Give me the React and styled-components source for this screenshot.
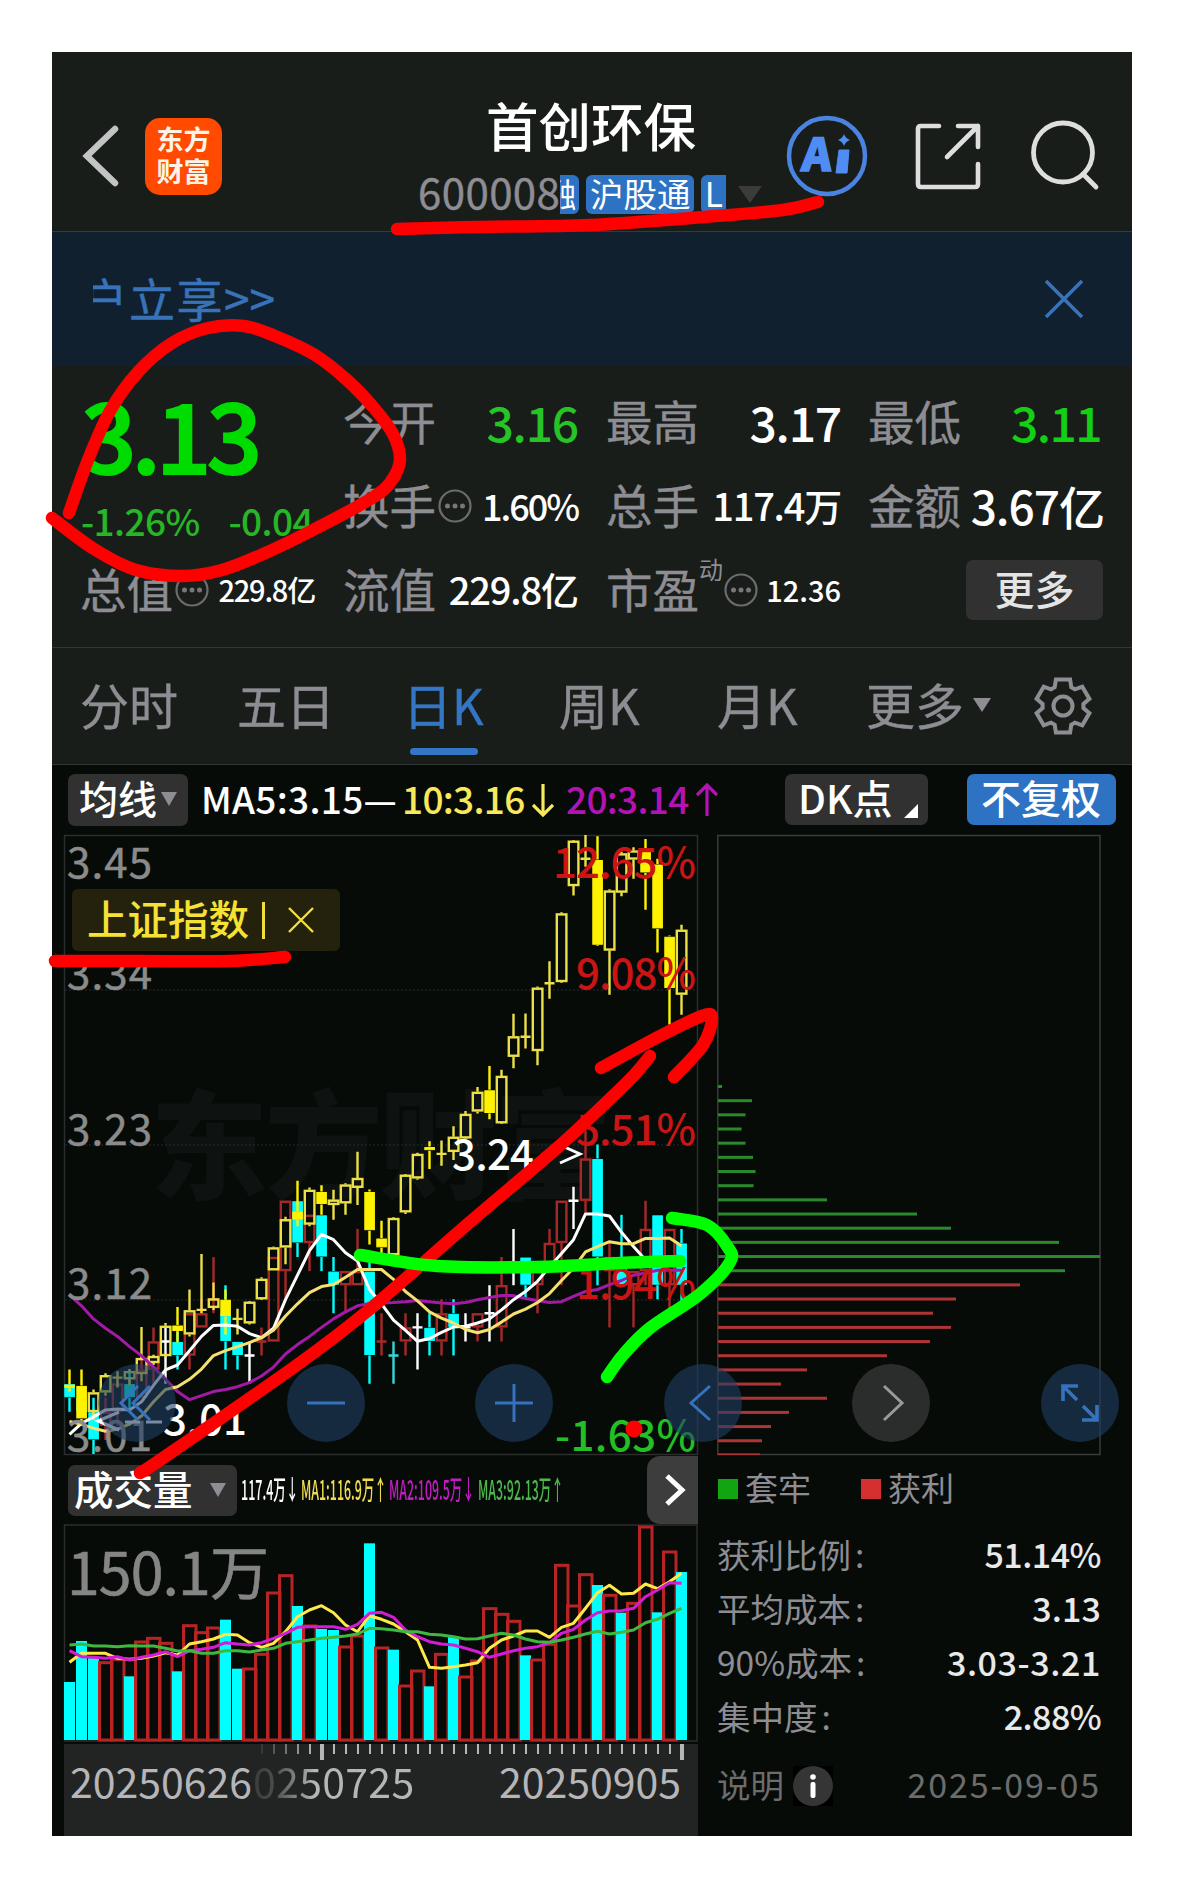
import styled, { createGlobalStyle, css } from "styled-components";

const GlobalStyle = createGlobalStyle`
  body{
    margin: 0;
    background-color: #fff;
    font-family: "Noto Sans CJK SC", "Noto Sans", sans-serif;
  }
  *{
    box-sizing: border-box;
  }
`

const Page = styled.div`
  position: relative;
  width: 1184px;
  height: 1888px;
  padding: 52px;
  overflow: hidden;
`

const Phone = styled.main`
  display: flex;
  flex-direction: column;
  width: 1080px;
  height: 1784px;
  background-color: #060b08;
  line-height: 1;
  white-space: nowrap;
  overflow: hidden;
`

/* ---------- header ---------- */

const Header = styled.header`
  display: grid;
  grid-template-columns: 93px 77px 196px 315px 1fr;
  height: 180px;
  background-color: #191d1a;
  border-bottom: 1px solid #343b38;
  align-items: start;

  .back{
    margin: 70px 0 0 27px;
  }
`

const Logo = styled.div`
  display: flex;
  flex-direction: column;
  justify-content: center;
  align-items: center;
  width: 77px;
  height: 77px;
  margin-top: 66px;
  padding-bottom: 4px;
  border-radius: 15px;
  background-color: #ff4a00;
  color: #fff3e6;
  font-size: 27px;
  font-weight: 700;
  line-height: 32px;
`

const TitleBox = styled.div`
  grid-column: 4;
  padding-top: 46px;

  h1{
    margin: 0 0 0 68px;
    color: #fff;
    font-size: 52.5px;
    font-weight: 500;
    line-height: 52px;
  }
`

const CodeRow = styled.div`
  display: flex;
  align-items: center;
  height: 39px;
  margin-top: 25px;

  .code{
    width: 144px;
    padding-bottom: 7px;
    color: #8e8d93;
    font-size: 42px;
    letter-spacing: .4px;
    -webkit-text-stroke: .4px #8e8d93;
  }
`

const Badge = styled.span`
  display: flex;
  justify-content: ${p => p.$end ? "flex-end" : "center"};
  align-items: center;
  width: ${p => p.$w}px;
  height: 39px;
  margin-right: 7px;
  padding: 0 ${p => p.$end ? 3 : 0}px 4px 0;
  border-radius: ${p => p.$radius || "6px"};
  background-color: #2e72c4;
  color: #fff;
  font-size: 33.5px;
  overflow: hidden;
  flex-shrink: 0;
`

const Triangle = styled.span`
  flex-shrink: 0;
  width: 0;
  height: 0;
  margin: ${p => p.$m || 0};
  border-left: ${p => p.$w / 2}px solid transparent;
  border-right: ${p => p.$w / 2}px solid transparent;
  border-top: ${p => p.$h}px solid ${p => p.$color};
`

const HeaderIcons = styled.div`
  display: flex;
  align-items: flex-start;
  padding-top: 60px;
  padding-left: 50px;

  svg{
    flex-shrink: 0;
  }
`

const Banner = styled.section`
  display: flex;
  justify-content: space-between;
  align-items: center;
  height: 134px;
  padding: 0 47px 0 41px;
  background-color: #11202f;
  color: #3873b9;

  .clip{
    display: flex;
    justify-content: flex-end;
    width: 182px;
    padding-bottom: 4px;
    overflow: hidden;
    font-size: 46px;
    -webkit-text-stroke: .5px #3873b9;
  }
  .text{
    letter-spacing: 1.5px;
  }
`

/* ---------- quote ---------- */

const Quote = styled.section`
  display: grid;
  grid-template-columns: 232px 232px 231px 233px;
  grid-template-rows: 84px 84px 84px;
  column-gap: 31px;
  height: 282px;
  padding: 14px 0 0 29px;
  background-color: #191d1a;
  border-bottom: 1px solid #333633;
`

const Price = styled.div`
  grid-row: span 2;

  .now{
    padding-top: 12px;
    color: #00dc00;
    font-size: 97px;
    font-weight: 500;
    line-height: 80px;
    letter-spacing: -4.6px;
    -webkit-text-stroke: 2.2px #00dc00;
  }
  .change{
    display: flex;
    justify-content: space-between;
    margin-top: 30px;
    color: #26b626;
    font-size: 37px;
    font-weight: 500;
    letter-spacing: -.6px;
  }
`

const Cell = styled.div`
  display: flex;
  align-items: center;
  height: 84px;
  width: ${p => p.$w || 234}px;
`

const Label = styled.span`
  padding-bottom: 4px;
  margin-left: -1px;
  color: #8e8d93;
  font-size: 46.5px;
  -webkit-text-stroke: .4px #8e8d93;
`

const Sup = styled.sup`
  align-self: flex-start;
  margin-top: 9px;
  margin-right: -1px;
  color: #8e8d93;
  font-size: 24px;
  line-height: 1;
`

const Value = styled.span`
  margin-left: auto;
  padding-bottom: 2px;
  color: ${p => p.$color || "#fff"};
  font-size: ${p => p.$size}px;
  font-weight: 500;
  letter-spacing: ${p => p.$ls || 0}px;
`

const MoreButton = styled.button`
  width: 138px;
  height: 60px;
  margin-left: 97px;
  padding: 0 0 5px;
  border: 0 none;
  border-radius: 7px;
  background-color: #303130;
  color: #e4e4e4;
  font: 500 40px/1 "Noto Sans CJK SC", sans-serif;
`

/* ---------- tabs ---------- */

const Tabs = styled.nav`
  display: grid;
  grid-template-columns: 157px 171px 151px 158px 149px 166px 1fr;
  height: 117px;
  padding: 0 0 0 28px;
  background-color: #191d1a;
  border-bottom: 1px solid #333633;
`

const Tab = styled.div`
  display: flex;
  align-items: flex-start;
  padding-top: ${p => p.$icon ? 28 : 31}px;
  padding-left: ${p => p.$icon ? 1 : 0}px;
  color: ${p => p.$active ? "#3476c4" : "#8e8d93"};
  font-size: 49px;
  line-height: 50px;
  -webkit-text-stroke: .4px currentColor;

  ${p => p.$active && css`
    flex-direction: column;
    text-indent: -5px;
    &::after{
      content: "";
      width: 68px;
      height: 7px;
      margin: 19px 0 0 2px;
      border-radius: 4px;
      background-color: #3476c4;
    }
  `}
`

/* ---------- chart area ---------- */

const Toolbar = styled.div`
  display: flex;
  align-items: center;
  height: 67px;
  padding: 2px 16px 0;
`

const ChipButton = styled.button`
  display: flex;
  align-items: center;
  flex-shrink: 0;
  width: ${p => p.$w}px;
  height: ${p => p.$h || 51}px;
  padding: 0 0 5px ${p => p.$pl}px;
  border: 0 none;
  border-radius: 7px;
  background-color: ${p => p.$blue ? "#2e72c4" : "#303130"};
  color: #fff;
  font: 500 ${p => p.$size || 40}px/1 "Noto Sans CJK SC", sans-serif;
  white-space: nowrap;
`

const Corner = styled.i`
  align-self: flex-end;
  width: 0;
  height: 0;
  margin: 0 0 2px 11px;
  border-left: 14px solid transparent;
  border-bottom: 14px solid #fff;
`

const MaText = styled.span`
  flex-shrink: 0;
  display: flex;
  align-items: center;
  width: ${p => p.$w}px;
  color: ${p => p.$color};
  font-size: 37px;
  font-weight: 500;
  letter-spacing: ${p => p.$ls ?? -.7}px;
  padding-bottom: 3px;

  svg{
    margin: 4px 0 0 7px;
  }
`

const Body = styled.div`
  display: grid;
  grid-template-columns: 634px 384px;
  column-gap: 19px;
  padding-left: 12px;
  height: 1004px;
`

const Column = styled.div`
  display: flex;
  flex-direction: column;
`

const ChartBox = styled.div`
  position: relative;
  height: ${p => p.$h}px;
  flex-shrink: 0;

  >svg{
    display: block;
    overflow: visible;
  }
`

const IndexTag = styled.div`
  position: absolute;
  left: 8px;
  top: 57px;
  display: flex;
  align-items: center;
  width: 268px;
  height: 62px;
  padding: 0 0 4px 15px;
  border-radius: 6px;
  background-color: #24220d;
  color: #f5e234;
  font-size: 40.5px;
  font-weight: 500;

  i{
    width: 3px;
    height: 37px;
    margin: 4px 22px 0 13px;
    background-color: #f0de3c;
  }
  svg{
    margin-top: 4px;
  }
`

const RoundButton = styled.button`
  position: absolute;
  left: ${p => p.$left}px;
  top: 532px;
  z-index: 2;
  display: flex;
  justify-content: center;
  align-items: center;
  width: 78px;
  height: 78px;
  padding: 0;
  border: 0 none;
  border-radius: 50%;
  background-color: ${p => p.$gray ? "rgba(50,51,50,.85)" : "rgba(32,62,100,.6)"};
`

const VolumeBar = styled.div`
  display: flex;
  align-items: center;
  height: 68px;
  padding-left: 4px;
`

const Squeezed = styled.span`
  width: ${p => p.$w}px;
  height: 30px;
  flex-shrink: 0;

  span{
    display: inline-block;
    color: ${p => p.$color};
    font-size: 27px;
    font-weight: 500;
    transform: scaleX(${p => p.$k});
    transform-origin: left center;
  }
`

const NextButton = styled.button`
  width: 51px;
  height: 68px;
  margin-left: auto;
  padding: 2px 0 0 5px;
  border: 0 none;
  border-radius: 13px 0 0 13px;
  background-color: #3c3d3c;
`

const Axis = styled.div`
  height: 92px;
  background-color: #222423;
`

const Dates = styled.div`
  display: flex;
  align-items: center;
  height: 40px;
  margin-top: -18px;
  padding: 0 17px 0 6px;
  color: #b6b5b8;
  font-size: 41px;

  span:last-child{
    margin-left: auto;
  }
  .mid{
    margin-left: 1px;
    letter-spacing: .3px;
    color: transparent;
    background: linear-gradient(90deg, #3a3b3b 0, #4c4c4c 22px, #b6b5b8 62px);
    background-clip: text;
    -webkit-background-clip: text;
  }
`

const Legend = styled.div`
  display: flex;
  align-items: center;
  height: 62px;

  span{
    display: flex;
    align-items: center;
    width: 143px;
    color: #8e8d93;
    font-size: 33px;
  }
  i{
    width: 20px;
    height: 20px;
    margin: 4px 7px 0 1px;
  }
`

const Stat = styled.div`
  display: flex;
  justify-content: space-between;
  align-items: center;
  height: 54px;
  padding-bottom: 4px;
  color: ${p => p.$dim ? "#6c6c6d" : "#8e8d93"};
  font-size: 33.5px;

  .colon{
    padding-left: 4px;
  }
  b{
    margin-left: auto;
    color: ${p => p.$dim ? "#6c6c6d" : "#e9e9e9"};
    font-weight: ${p => p.$dim ? 400 : 500};
    font-size: 34px;
    letter-spacing: ${p => p.$dim ? 1.9 : p.$ls}px;
  }
`

const Info = styled.span`
  display: flex;
  width: 40px;
  height: 40px;
  margin: 4px 0 0 9px;
  background-color: #000;
`

const Marks = styled.svg`
  position: absolute;
  left: 0;
  top: 0;
  z-index: 5;
  pointer-events: none;
`

/* ---------- data ---------- */

const X0 = 69.5
const STEP = 12
const barX = i => X0 + i * STEP
const priceY = p => 835 + (3.45 - p) * 1406.8
const levelY = v => 835 + (v - 37) / 2.449

// open, close, low, high
const STOCK = [
  [3.06,3.05,3.04,3.06],[3.05,3.04,3.04,3.05],[3.04,3.02,3.01,3.05],[3.03,3.04,3.02,3.05],[3.04,3.06,3.03,3.06],[3.06,3.05,3.04,3.07],
  [3.05,3.07,3.05,3.08],[3.07,3.09,3.06,3.10],[3.09,3.09,3.06,3.10],[3.09,3.08,3.07,3.10],[3.08,3.11,3.07,3.11],[3.10,3.11,3.10,3.12],
  [3.12,3.12,3.11,3.15],[3.11,3.09,3.07,3.13],[3.09,3.08,3.07,3.09],[3.08,3.08,3.06,3.09],[3.09,3.09,3.08,3.10],[3.09,3.15,3.09,3.15],
  [3.14,3.19,3.12,3.19],[3.19,3.16,3.15,3.19],[3.16,3.18,3.14,3.18],[3.18,3.15,3.14,3.18],[3.14,3.13,3.11,3.15],[3.13,3.14,3.11,3.14],
  [3.13,3.14,3.13,3.17],[3.14,3.08,3.06,3.15],[3.09,3.09,3.08,3.11],[3.08,3.08,3.06,3.09],[3.09,3.10,3.08,3.11],[3.10,3.10,3.07,3.11],
  [3.10,3.09,3.08,3.11],[3.09,3.11,3.08,3.12],[3.11,3.10,3.08,3.12],[3.10,3.10,3.09,3.11],[3.10,3.11,3.09,3.11],[3.11,3.11,3.09,3.13],
  [3.10,3.13,3.09,3.15],[3.14,3.14,3.13,3.17],[3.15,3.13,3.12,3.15],[3.13,3.14,3.11,3.14],[3.14,3.16,3.14,3.17],[3.16,3.19,3.13,3.19],
  [3.19,3.19,3.17,3.20],[3.19,3.22,3.18,3.24],[3.22,3.15,3.13,3.23],[3.14,3.15,3.10,3.16],[3.15,3.13,3.13,3.18],[3.13,3.14,3.10,3.14],
  [3.14,3.17,3.13,3.19],[3.18,3.13,3.12,3.18],[3.13,3.17,3.11,3.17],[3.16,3.13,3.11,3.17],
]
const WHITE_BARS = [8, 15, 29, 33, 35, 37, 42]
const CYAN_CROSS = [27]

// body top, body bottom, high, low, filled
const INDEX = [
  [1382,1392,1346,1400,1],[1385,1467,1346,1480,1],[1402,1450,1395,1470],[1360,1402,1355,1410],[1366,1366,1350,1390],[1350,1370,1345,1385],
  [1318,1357,1242,1375],[1313,1330,1310,1335],[1239,1313,1232,1316],[1237,1253,1193,1280,1],[1201,1260,1150,1265],[1200,1200,1063,1208],
  [1172,1195,1133,1200],[1174,1216,1150,1260,1],[1222,1222,1197,1260],[1180,1233,1178,1236],[1124,1174,1120,1176],[1047,1103,1045,1103],
  [978,1047,972,1088],[958,980,884,995,1],[906,991,900,995],[910,942,895,967,1],[930,943,906,979],[893,939,890,967],
  [877,901,813,943],[910,1006,905,1040,1],[1024,1048,982,1062,1],[975,1066,973,1068],[869,961,867,965],[818,878,815,881],
  [800,810,787,855,1],[818,818,785,847],[776,813,750,833],[720,780,713,782],[666,714,654,719],[661,719,603,733,1],
  [627,743,612,745],[530,580,475,608],[531,531,474,560],[411,566,408,601],[400,400,346,438],[229,397,226,399],
  [51,162,49,185],[95,95,37,115],[97,307,40,309,1],[173,320,170,428],[82,178,78,187],[75,97,67,144],
  [70,130,47,220,1],[108,267,95,325,1],[285,413,283,502,1],[269,428,257,477],
]

const MA5 = [1505,1478,1462,1445,1443,1445,1425,1385,1347,1335,1300,1265,1238,1237,1240,1258,1268,1245,1175,1115,1055,1015,1028,1060,1080,1150,1185,1225,1250,1277,1270,1255,1242,1240,1232,1222,1200,1175,1155,1130,1095,1062,1028,965,965,970,1010,1045,1078,1075,1075,1075]
const MA10 = [1473,1480,1490,1497,1492,1480,1460,1425,1395,1388,1370,1345,1312,1300,1290,1280,1268,1250,1215,1185,1158,1143,1138,1120,1101,1101,1101,1125,1155,1178,1205,1220,1232,1248,1256,1248,1230,1210,1198,1182,1160,1128,1098,1058,1045,1033,1038,1038,1025,1025,1024,1043]
const MA20 = [1163,1190,1222,1245,1265,1290,1312,1340,1370,1400,1420,1410,1400,1395,1388,1378,1362,1340,1308,1285,1265,1243,1222,1205,1190,1184,1183,1182,1180,1177,1180,1183,1185,1182,1175,1170,1165,1165,1172,1177,1182,1180,1167,1155,1150,1138,1128,1115,1110,1103,1103,1103]

// distance of every bar's top below the volume header
const VOL = [726,603,650,665,655,709,603,592,607,694,554,575,561,539,686,684,640,456,404,498,555,567,570,618,585,310,621,629,735,690,739,640,588,708,660,503,520,541,646,657,610,373,495,401,435,463,518,487,258,517,333,396]
const VOL_DOWN = [0,1,2,5,9,13,14,19,21,22,25,27,30,32,38,44,46,49,51]
const VMA1 = [667,640,640,640,655,658,655,648,638,645,612,605,597,583,585,608,622,610,575,530,510,497,518,555,575,527,538,552,575,600,682,685,680,675,668,625,600,588,573,573,592,562,550,505,458,436,462,460,432,446,425,400]
const VMA2 = [632,650,652,655,650,660,652,645,635,650,632,628,622,608,612,615,608,595,580,562,560,560,560,568,553,520,517,532,570,590,605,612,615,625,635,652,642,632,625,620,608,580,568,540,518,513,512,505,470,450,428,430]
const VMA3 = [615,612,618,618,620,617,618,618,625,633,632,640,640,632,632,636,630,625,610,605,600,595,592,588,582,565,566,570,575,575,583,585,590,597,596,588,580,585,597,605,607,600,592,582,574,582,577,570,548,538,520,505]
const volY = v => 1440 + v / 3

const CHIPS = [4,34,27.5,23.5,27.5,35,37.5,35.5,109,199,233,341,382,347,302,238,215,233,212,169,89,63,109,71,53,44,42]

// label, value, letter spacing of the value
const STATS = [
  ["获利比例", "51.14%", -.5],
  ["平均成本", "3.13", .1],
  ["90%成本", "3.03-3.21", .6],
  ["集中度", "2.88%", -.6],
]

const linePath = (values, toY) => values.map((v, i) => `${i ? "L" : "M"}${barX(i)} ${toY(v).toFixed(1)}`).join("")

// smooth curve through the given points
const curve = (pts) => {
  let d = `M${pts[0]}`
  for (let i = 0; i < pts.length - 1; i++) {
    const a = pts[i - 1] || pts[i], b = pts[i], c = pts[i + 1], e = pts[i + 2] || c
    d += `C${b[0] + (c[0] - a[0]) / 6} ${b[1] + (c[1] - a[1]) / 6} ${c[0] - (e[0] - b[0]) / 6} ${c[1] - (e[1] - b[1]) / 6} ${c}`
  }
  return d
}

/* ---------- drawings ---------- */

const Candle = ({ x, top, bottom, high, low, color, filled }) => {
  if (bottom - top < 1.5) {
    return (
      <g stroke={color} strokeWidth="2.4">
        <path d={`M${x} ${high}V${low}M${x - 5} ${top}h10`} />
      </g>
    )
  }
  return (
    <g stroke={color} strokeWidth="2.4" fill={filled ? color : "none"}>
      <path d={`M${x} ${high}V${top}M${x} ${bottom}V${low}`} />
      <rect x={x - 4.7} y={top + 1} width="9.6" height={Math.max(bottom - top - 2, 1)} strokeWidth={filled ? 1 : 2.4} />
    </g>
  )
}

const AXIS_LABELS = [
  [878, "3.45", "12.65%", 143],
  [989, "3.34", "9.08%", 120],
  [1145, "3.23", "5.51%", 120],
  [1299, "3.12", "1.94%", 120],
  [1451, "3.01", "-1.63%", 141],
]

const PriceChart = () => {
  return (
    <svg width="634" height="624" viewBox="64 832 634 624" fontFamily="Noto Sans CJK SC" fontSize="42">
      <text x="150" y="1190" fontSize="118" fontWeight="900" fill="#0e1210" textLength="462">东方财富</text>
      <path d="M64.5 835.5H697.5V1454.5H64.5Z" fill="none" stroke="#2b2e2c" strokeWidth="1.5" />
      <path d="M65 990H697M65 1145H697M65 1300H697" stroke="#272a28" strokeDasharray="2 2" />
      {STOCK.map(([o, c, l, h], i) => {
        let color = o > c ? "#00ffff" : "#a82828"
        if (WHITE_BARS.includes(i)) color = "#fff"
        if (CYAN_CROSS.includes(i)) color = "#36d6d6"
        return <Candle key={i} x={barX(i)} top={priceY(Math.max(o, c))} bottom={priceY(Math.min(o, c))}
          high={priceY(h)} low={priceY(l)} color={color} filled={o > c} />
      })}
      {INDEX.map(([t, b, h, l, f], i) => (
        <Candle key={i} x={barX(i)} top={levelY(t)} bottom={levelY(b)} high={levelY(h)} low={levelY(l)}
          color={f ? "#fff200" : "#ece048"} filled={f} />
      ))}
      <g fill="none" strokeWidth="3" strokeLinejoin="round">
        <path d={linePath(MA20, levelY)} stroke="#a21aa6" />
        <path d={linePath(MA5, levelY)} stroke="#fff" />
        <path d={linePath(MA10, levelY)} stroke="#f5e070" />
      </g>
      {AXIS_LABELS.map(([y, left, right, w]) => (
        <g key={left}>
          <text x="67" y={y} fill="#8b8b8b" textLength="85" stroke="#8b8b8b" strokeWidth=".5">{left}</text>
          <text x={696 - w} y={y} fill={right[0] === "-" ? "#22c022" : "#cc1414"} textLength={w} fontWeight="500">{right}</text>
        </g>
      ))}
      <text x="452" y="1170" fill="#fff" fontWeight="500" textLength="82">3.24</text>
      <path d="M541 1155h14M560 1145l20 9l-20 9" fill="none" stroke="#fff" strokeWidth="3" />
      <path d="M119 1412l-21 9l21 9M125 1422h15M146 1422h16" fill="none" stroke="#fff" strokeWidth="3" />
      <text x="163" y="1435" fill="#fff" fontWeight="500" textLength="84">3.01</text>
    </svg>
  )
}

const VolumeChart = () => {
  return (
    <svg width="634" height="220" viewBox="64 1524 634 220" fontFamily="Noto Sans CJK SC">
      <path d="M64.5 1525H697V1741H64.5Z" fill="none" stroke="#2b2e2c" strokeWidth="1.5" />
      {VOL.map((v, i) => VOL_DOWN.includes(i)
        ? <rect key={i} x={barX(i) - 5.5} y={volY(v)} width="11" height={1740 - volY(v)} fill="#00ffff" />
        : <rect key={i} x={barX(i) - 6} y={volY(v) + 1} width="12.5" height={1739 - volY(v)} fill="none" stroke="#b82424" strokeWidth="3" />
      )}
      <text x="67" y="1595" fontSize="59" fill="#858585" stroke="#858585" strokeWidth=".6" textLength="202">150.1万</text>
      <g fill="none" strokeWidth="3" strokeLinejoin="round">
        <path d={linePath(VMA1, volY)} stroke="#ffe94a" />
        <path d={linePath(VMA2, volY)} stroke="#d41cd4" />
        <path d={linePath(VMA3, volY)} stroke="#3fb83f" />
      </g>
    </svg>
  )
}

const Ticks = () => {
  const ticks = []
  for (let i = 0; i <= 35; i++) {
    const long = i === 5 || i === 35
    ticks.push(<rect key={i} x={261 + i * 12 - (long ? 1 : 0)} y="0" width={long ? 4 : 2} height={long ? 16 : 10}
      fill="#b6b5b8" opacity={Math.min(1, .15 + i * .2)} />)
  }
  return <svg width="634" height="34" viewBox="64 0 634 34" style={{ display: "block" }}>{ticks}</svg>
}

const ChipChart = () => {
  return (
    <svg width="384" height="624" viewBox="717 832 384 624">
      <path d="M717.8 835.5H1100V1454.5H717.8Z" fill="none" stroke="#3a3c3a" strokeWidth="1.5" />
      {CHIPS.map((w, i) => (
        <rect key={i} x="718" y={1085 + i * 14.17} width={w} height={i === CHIPS.length - 1 ? 1.6 : 3} fill={i < 14 ? "#2a8a2c" : "#ae3535"} />
      ))}
    </svg>
  )
}

const DotsIcon = styled.svg`
  flex-shrink: 0;
  margin-left: 2px;
`

const Dots = () => (
  <DotsIcon width="34" height="34" viewBox="0 0 34 34">
    <circle cx="17" cy="17" r="15.5" fill="none" stroke="#6c6c6d" strokeWidth="2.2" />
    <g fill="#77777a"><circle cx="9.5" cy="17" r="2.5" /><circle cx="17" cy="17" r="2.5" /><circle cx="24.5" cy="17" r="2.5" /></g>
  </DotsIcon>
)

const Arrow = ({ up }) => (
  <svg width="22" height="34" viewBox="0 0 22 34" fill="none" stroke="currentColor" strokeWidth="3.2">
    <path d={up ? "M11 33V2M1 12L11 2L21 12" : "M11 1V32M1 22L11 32L21 22"} />
  </svg>
)

const Gear = () => {
  // six teeth round a hexagonal body
  const pts = []
  for (let k = 0; k < 6; k++) {
    [[-24, 20.5], [-15, 27.3], [15, 27.3], [24, 20.5]].forEach(([a, r]) => {
      const t = (k * 60 + a - 90) * Math.PI / 180
      pts.push(`${(30 + r * Math.cos(t)).toFixed(1)},${(30 + r * Math.sin(t)).toFixed(1)}`)
    })
  }
  return (
    <svg width="60" height="60" viewBox="0 0 60 60" fill="none" stroke="#8e8d93" strokeWidth="4">
      <polygon points={pts.join(" ")} strokeLinejoin="miter" />
      <circle cx="30" cy="30" r="9.5" />
    </svg>
  )
}

const RED_MARKS = [
  [[397,229],[480,227],[590,225],[704,217],[783,210],[818,202]],
  [[69,513],[88,460],[110,411],[138,372],[172,343],[208,328],[244,326],[275,336],[315,355],[347,380],[374,408],[393,434],[400,459],[392,480],[372,498],[311,531],[261,555],[222,570],[183,576],[136,570],[94,549],[52,518]],
  [[55,961],[140,961],[230,961],[285,957]],
  [[140,1473],[163,1458],[297,1365],[370,1309],[470,1222],[557,1148],[615,1094],[636,1073],[650,1056]],
  [[601,1068],[660,1036],[702,1016],[712,1018],[703,1045],[674,1077]],
]
const GREEN_MARKS = [
  [[360,1255],[437,1266],[537,1267],[620,1263],[680,1261]],
  [[672,1218],[707,1225],[727,1246],[730,1262],[700,1294],[650,1328],[623,1355],[607,1377]],
]

const Annotations = () => (
  <Marks width="1184" height="1888" viewBox="0 0 1184 1888">
    <g fill="none" strokeWidth="12.5" strokeLinecap="round" strokeLinejoin="round">
      {RED_MARKS.map((pts, i) => <path key={i} d={curve(pts)} stroke="#ff0000" />)}
      {GREEN_MARKS.map((pts, i) => <path key={i} d={curve(pts)} stroke="#00ff00" />)}
    </g>
    <circle cx="634" cy="1429" r="8.5" fill="#ff0000" />
  </Marks>
)

const App = () => {
  return (
    <>
      <GlobalStyle />
      <Page>
        <Phone>
          <Header>
            <svg className="back" width="42" height="68" viewBox="0 0 42 68" fill="none" stroke="#c3c3c5" strokeWidth="6.5" strokeLinecap="round">
              <path d="M36 7L8 34L36 61" />
            </svg>
            <Logo><span>东方</span><span>财富</span></Logo>
            <TitleBox>
              <h1>首创环保</h1>
              <CodeRow>
                <span className="code">600008</span>
                <Badge $w={19} $end $radius="0 6px 6px 0">融</Badge>
                <Badge $w={108}>沪股通</Badge>
                <Badge $w={25} $radius="6px 0 0 6px">L</Badge>
                <Triangle $w={24} $h={17} $color="#3a3b3a" $m="0 0 0 5px" />
              </CodeRow>
            </TitleBox>
            <HeaderIcons>
              <svg width="88" height="88" viewBox="0 0 88 88">
                <circle cx="44" cy="44" r="38" fill="none" stroke="#4a84e0" strokeWidth="4.5" />
                <text x="23" y="59" fill="#4f8df5" fontFamily="Noto Sans CJK SC" fontWeight="900" fontSize="45" stroke="#4f8df5" strokeWidth="1.5" transform="skewX(-5)">A</text>
                <path d="M56 38h10l-2 23h-11z" fill="#4f8df5" stroke="#4f8df5" strokeLinejoin="round" />
                <path d="M61 22q1.5 4.5 6 6q-4.5 1.5-6 6q-1.5-4.5-6-6q4.5-1.5 6-6z" fill="#4f8df5" />
              </svg>
              <svg width="139" height="88" viewBox="871 112 139 88" fill="none" stroke="#dededf" strokeWidth="4.6" strokeLinecap="round" strokeLinejoin="round">
                <path d="M939 126h-18q-3 0-3 3v55q0 3 3 3h54q3 0 3-3v-20M958 126h20v21M978 126l-31 31" />
              </svg>
              <svg width="92" height="88" viewBox="1010 112 92 88" fill="none" stroke="#dededf" strokeWidth="4.8" strokeLinecap="round">
                <circle cx="1063" cy="152.5" r="29.5" />
                <path d="M1083 174l13 13" />
              </svg>
            </HeaderIcons>
          </Header>

          <Banner>
            <div className="clip">
              <span className="text">户立享</span><span>&gt;&gt;</span>
            </div>
            <svg width="42" height="42" viewBox="0 0 42 42" stroke="#3873b9" strokeWidth="3.6">
              <path d="M3 3L39 39M39 3L3 39" />
            </svg>
          </Banner>

          <Quote>
            <Price>
              <div className="now">3.13</div>
              <div className="change"><span>-1.26%</span><span>-0.04</span></div>
            </Price>
            <Cell><Label>今开</Label><Value $size={48} $ls={-1.2} $color="#26c426">3.16</Value></Cell>
            <Cell><Label>最高</Label><Value $size={48} $ls={-1.2}>3.17</Value></Cell>
            <Cell $w={232}><Label>最低</Label><Value $size={48} $ls={-1.6} $color="#14d014">3.11</Value></Cell>
            <Cell><Label>换手</Label><Dots /><Value $size={36} $ls={-2}>1.60%</Value></Cell>
            <Cell><Label>总手</Label><Value $size={38} $ls={-1.2}>117.4万</Value></Cell>
            <Cell $w={235}><Label>金额</Label><Value $size={46} $ls={-1}>3.67亿</Value></Cell>
            <Cell><Label>总值</Label><Dots /><Value $size={29} $ls={-1.2}>229.8亿</Value></Cell>
            <Cell><Label>流值</Label><Value $size={38} $ls={-1.1}>229.8亿</Value></Cell>
            <Cell><Label>市盈</Label><Sup>动</Sup><Dots /><Value $size={29}>12.36</Value></Cell>
            <Cell><MoreButton>更多</MoreButton></Cell>
          </Quote>

          <Tabs>
            <Tab>分时</Tab>
            <Tab>五日</Tab>
            <Tab $active>日K</Tab>
            <Tab>周K</Tab>
            <Tab>月K</Tab>
            <Tab>更多<Triangle $w={18} $h={14} $color="#8e8d93" $m="19px 0 0 9px" /></Tab>
            <Tab $icon><Gear /></Tab>
          </Tabs>

          <Toolbar>
            <ChipButton $w={120} $h={52} $pl={11} $size={39}>均线<Triangle $w={17} $h={14} $color="#8e8d93" $m="4px 0 0 4px" /></ChipButton>
            <MaText $w={201} $ls={.3} style={{ marginLeft: 13 }} $color="#fff">MA5:3.15—</MaText>
            <MaText $w={164} $color="#f8e85a">10:3.16<Arrow /></MaText>
            <MaText $w={219} $color="#b413b4">20:3.14<Arrow up /></MaText>
            <ChipButton $w={143} $pl={13}>DK点<Corner /></ChipButton>
            <ChipButton $w={149} $pl={14} $blue style={{ marginLeft: 39 }}>不复权</ChipButton>
          </Toolbar>

          <Body>
            <Column>
              <ChartBox $h={624}>
                <PriceChart />
                <IndexTag>
                  上证指数<i />
                  <svg width="28" height="28" viewBox="0 0 28 28" stroke="#f0de3c" strokeWidth="2.4"><path d="M2 2L26 26M26 2L2 26" /></svg>
                </IndexTag>
                <RoundButton $left={34}>
                  <svg width="40" height="40" viewBox="0 0 40 40" fill="none" stroke="#3573bd" strokeWidth="3"><path d="M21 3L4 20L21 37M33 3L16 20L33 37" /></svg>
                </RoundButton>
                <RoundButton $left={223}>
                  <svg width="38" height="38" viewBox="0 0 38 38" stroke="#3573bd" strokeWidth="3"><path d="M0 19H38" /></svg>
                </RoundButton>
                <RoundButton $left={411}>
                  <svg width="38" height="38" viewBox="0 0 38 38" stroke="#3573bd" strokeWidth="3"><path d="M0 19H38M19 0V38" /></svg>
                </RoundButton>
                <RoundButton $left={600}>
                  <svg width="40" height="40" viewBox="0 0 40 40" fill="none" stroke="#3573bd" strokeWidth="3"><path d="M27 3L8 20L27 37" /></svg>
                </RoundButton>
              </ChartBox>
              <VolumeBar>
                <ChipButton $w={169} $pl={6} $size={39.5}>成交量<Triangle $w={16} $h={14} $color="#8e8d93" $m="4px 0 0 17px" /></ChipButton>
                <Squeezed style={{ marginLeft: 4 }} $w={60} $k={.465} $color="#fff"><span>117.4万↓</span></Squeezed>
                <Squeezed $w={88} $k={.46} $color="#f0dc50"><span>MA1:116.9万↑</span></Squeezed>
                <Squeezed $w={89} $k={.46} $color="#c41cc4"><span>MA2:109.5万↓</span></Squeezed>
                <Squeezed $w={88} $k={.46} $color="#4db84d"><span>MA3:92.13万↑</span></Squeezed>
                <NextButton>
                  <svg width="24" height="34" viewBox="0 0 24 34" fill="none" stroke="#fff" strokeWidth="5"><path d="M4 3L19 17L4 31" /></svg>
                </NextButton>
              </VolumeBar>
              <ChartBox $h={220}><VolumeChart /></ChartBox>
              <Axis>
                <Ticks />
                <Dates>
                  <span>20250626</span><span className="mid">0250725</span><span>20250905</span>
                </Dates>
              </Axis>
            </Column>

            <Column>
              <ChartBox $h={624}>
                <ChipChart />
                <RoundButton $left={135} $gray>
                  <svg width="40" height="40" viewBox="0 0 40 40" fill="none" stroke="#9a9a9c" strokeWidth="3"><path d="M13 3L31 20L13 37" /></svg>
                </RoundButton>
                <RoundButton $left={324}>
                  <svg width="40" height="40" viewBox="0 0 40 40" fill="none" stroke="#3573bd" strokeWidth="3.6"><path d="M18 3H3V18M3 3L17 17M37 22V37H22M37 37L23 23" /></svg>
                </RoundButton>
              </ChartBox>
              <Legend>
                <span><i style={{ backgroundColor: "#11a611" }} />套牢</span>
                <span><i style={{ backgroundColor: "#d43030" }} />获利</span>
              </Legend>
              <div style={{ paddingTop: 11 }}>
                {STATS.map(([name, value, ls]) => (
                  <Stat key={name} $ls={ls}>{name}<span className="colon">:</span><b>{value}</b></Stat>
                ))}
              </div>
              <Stat $dim style={{ marginTop: 14 }}>
                说明
                <Info>
                  <svg width="40" height="40" viewBox="0 0 40 40">
                    <circle cx="20" cy="20" r="20" fill="#343534" />
                    <circle cx="20" cy="11" r="2.8" fill="#fff" />
                    <rect x="17.5" y="16" width="5" height="16" rx="2" fill="#fff" />
                  </svg>
                </Info>
                <b>2025-09-05</b>
              </Stat>
            </Column>
          </Body>
        </Phone>
        <Annotations />
      </Page>
    </>
  );
}

export default App;
